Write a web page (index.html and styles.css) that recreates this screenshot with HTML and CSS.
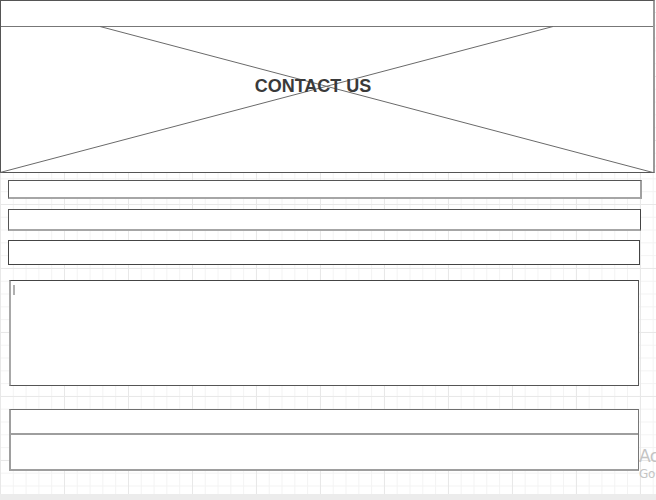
FILE: index.html
```html
<!DOCTYPE html>
<html>
<head>
<meta charset="utf-8">
<link rel="stylesheet" href="styles.css">
</head>
<body>
<div class="page">
  <div class="canvas">
    <div class="hero">
      <div class="hero-bar"></div>
      <div class="hero-image">
        <svg class="hero-x" width="655" height="173" viewBox="0 0 655 173">
          <line x1="100" y1="26.5" x2="653" y2="172.5" stroke="#6a6a6a" stroke-width="1"/>
          <line x1="553" y1="26.5" x2="0" y2="172.5" stroke="#6a6a6a" stroke-width="1"/>
        </svg>
        <span class="hero-title">CONTACT US</span>
      </div>
    </div>
    <div class="field field-1"></div>
    <div class="field field-2"></div>
    <div class="field field-3"></div>
    <div class="field message"><span class="caret"></span></div>
    <div class="field submit">
      <div class="submit-top"></div>
      <div class="submit-bottom"></div>
    </div>
    <div class="watermark">
      <div class="wm-1">Activate Windows</div>
      <div class="wm-2">Go to Settings to activate Windows.</div>
    </div>
  </div>
  <div class="strip"></div>
</div>
</body>
</html>
```

FILE: styles.css
```css
html, body {
  margin: 0;
  padding: 0;
  width: 656px;
  height: 500px;
  overflow: hidden;
  background: #ffffff;
  font-family: "Liberation Sans", Arial, sans-serif;
}

.page {
  display: flex;
  flex-direction: column;
  width: 656px;
  height: 500px;
}

.canvas {
  position: relative;
  height: 494px;
  display: flex;
  flex-direction: column;
  align-items: flex-start;
  background-color: #ffffff;
  background-image:
    linear-gradient(to right, #e8e8e8 1px, transparent 1px),
    linear-gradient(to bottom, #e8e8e8 1px, transparent 1px),
    linear-gradient(to right, #f3f3f3 1px, transparent 1px),
    linear-gradient(to bottom, #f3f3f3 1px, transparent 1px);
  background-size: 64px 64px, 64px 64px, 12.8px 12.8px, 12.8px 12.8px;
  background-position: 0 0, 0 12px, 0 0, 0 12px;
  overflow: hidden;
}

.hero {
  position: relative;
  width: 652px;
  height: 171px;
  flex: none;
  background: #ffffff;
  border-top: 1px solid #555555;
  border-left: 1px solid #555555;
  border-bottom: 1px solid #555555;
  border-right: 2px solid #9a9a9a;
  display: flex;
  flex-direction: column;
}

.hero-bar {
  height: 25px;
  border-bottom: 1px solid #777777;
  flex: none;
}

.hero-image {
  flex: 1;
  display: flex;
  justify-content: center;
  align-items: flex-start;
  padding-top: 50px;
  padding-right: 28px;
  box-sizing: border-box;
}

.hero-x {
  position: absolute;
  left: -1px;
  top: -1px;
}

.hero-title {
  position: relative;
  font-size: 18px;
  line-height: 18px;
  font-weight: bold;
  color: #3a3a3a;
}

.field {
  flex: none;
  background: #ffffff;
  box-sizing: border-box;
}

.field-1 {
  margin: 7px 0 0 8px;
  width: 634px;
  height: 19px;
  border-top: 1px solid #555555;
  border-left: 1px solid #555555;
  border-right: 2px solid #a0a0a0;
  border-bottom: 2px solid #a6a6a6;
}

.field-2 {
  margin: 10px 0 0 8px;
  width: 633px;
  height: 22px;
  border-top: 1px solid #555555;
  border-left: 1px solid #555555;
  border-right: 1px solid #444444;
  border-bottom: 2px solid #a6a6a6;
}

.field-3 {
  margin: 9px 0 0 8px;
  width: 632px;
  height: 25px;
  border: 1px solid #444444;
}

.message {
  margin: 15px 0 0 9px;
  width: 630px;
  height: 106px;
  border-top: 1px solid #444444;
  border-left: 2px solid #a8a8a8;
  border-right: 1px solid #555555;
  border-bottom: 1px solid #555555;
  padding: 4px 0 0 2px;
}

.caret {
  display: block;
  width: 2px;
  height: 10px;
  background: #b0b0b0;
}

.submit {
  margin: 23px 0 0 9px;
  width: 630px;
  height: 62px;
  border-top: 1px solid #6e6e6e;
  border-left: 2px solid #9e9e9e;
  border-right: 1px solid #777777;
  border-bottom: 2px solid #9e9e9e;
  display: flex;
  flex-direction: column;
}

.submit-top {
  height: 23px;
  border-bottom: 2px solid #9e9e9e;
}

.submit-bottom {
  flex: 1;
}

.watermark {
  position: absolute;
  left: 639px;
  top: 446px;
  font-family: "DejaVu Sans", "Liberation Sans", sans-serif;
  color: #c4c4c4;
  white-space: nowrap;
}

.wm-1 {
  font-size: 17px;
  line-height: 20px;
  letter-spacing: -0.5px;
}

.wm-2 {
  font-size: 12px;
  line-height: 16px;
  letter-spacing: -0.3px;
}

.strip {
  height: 6px;
  background: #ececec;
  flex: none;
}
```
